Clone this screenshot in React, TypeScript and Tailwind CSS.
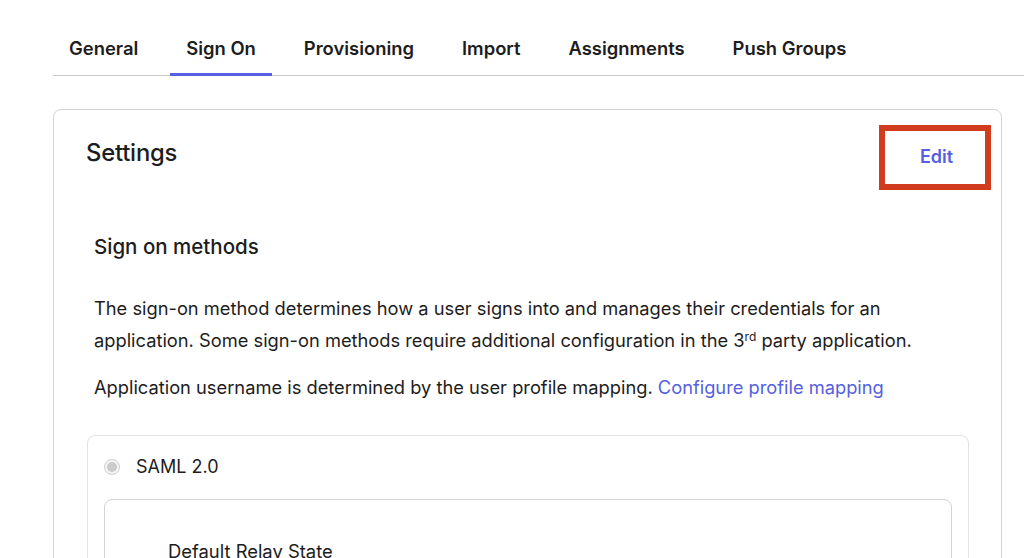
import React from "react";

const tabs = ["General", "Sign On", "Provisioning", "Import", "Assignments", "Push Groups"];

export default function App() {
  return (
    <div
      className="w-[1024px] h-[558px] overflow-hidden bg-white text-[#1d1d21]"
      style={{ fontFamily: "Inter, 'Noto Sans', sans-serif" }}
    >
      <div className="pt-[34px] pl-[53px]">
        <nav className="flex gap-4 border-b border-[#c9c9cb]">
          {tabs.map((t) => (
            <div
              key={t}
              className={
                "px-4 pb-[11px] text-[18.4px] font-semibold leading-[28px] border-b-[3px] -mb-px " +
                (t === "Sign On" ? "border-[#5460e0]" : "border-transparent")
              }
            >
              {t}
            </div>
          ))}
        </nav>

        <div className="mt-[33px] w-[949px] rounded-lg border border-[#d4d4d6] h-[600px]">
          <div className="flex items-start justify-between pl-8 pr-[10px] pt-[15px]">
            <h2 className="mt-[14px] text-[23.8px] font-medium leading-[28px] tracking-[-0.2px]">Settings</h2>
            <div className="flex h-[65px] w-[112px] items-center justify-center border-[6px] border-[#d13c1e] pb-[3px] pl-[3px]">
              <span className="text-[18px] font-semibold text-[#5460e0]">Edit</span>
            </div>
          </div>

          <div className="pl-10 pr-8">
            <h3 className="mt-[43px] text-[20.5px] font-medium leading-[28px]">Sign on methods</h3>
            <p className="mt-[31px] text-[18.3px] leading-[32px]">
              The sign-on method determines how a user signs into and manages their credentials for an application. Some
              sign-on methods require additional configuration in the 3<sup className="text-[12px]">rd</sup> party
              application.
            </p>
            <p className="mt-[15px] text-[18.3px] leading-[32px]">
              Application username is determined by the user profile mapping.{" "}
              <span className="text-[#5460e0]">Configure profile mapping</span>
            </p>
          </div>

          <div className="ml-[33px] mr-[32px] mt-[32px] rounded-lg border border-[#e3e3e5] px-4 pt-[16px] h-[300px]">
            <div className="flex items-center gap-[16px]">
              <span className="h-[16px] w-[16px] rounded-full border border-[#d0d0d0] bg-[#f4f4f4] flex items-center justify-center">
                <span className="h-[10px] w-[10px] rounded-full bg-[#cbcbcb]" />
              </span>
              <span className="text-[18px] leading-[30px]">SAML 2.0</span>
            </div>
            <div className="mt-[17px] rounded-lg border border-[#d4d4d6] pl-[63px] pt-[38px] h-[200px]">
              <div className="text-[18.4px] leading-[26px]">Default Relay State</div>
            </div>
          </div>
        </div>
      </div>
    </div>
  );
}
